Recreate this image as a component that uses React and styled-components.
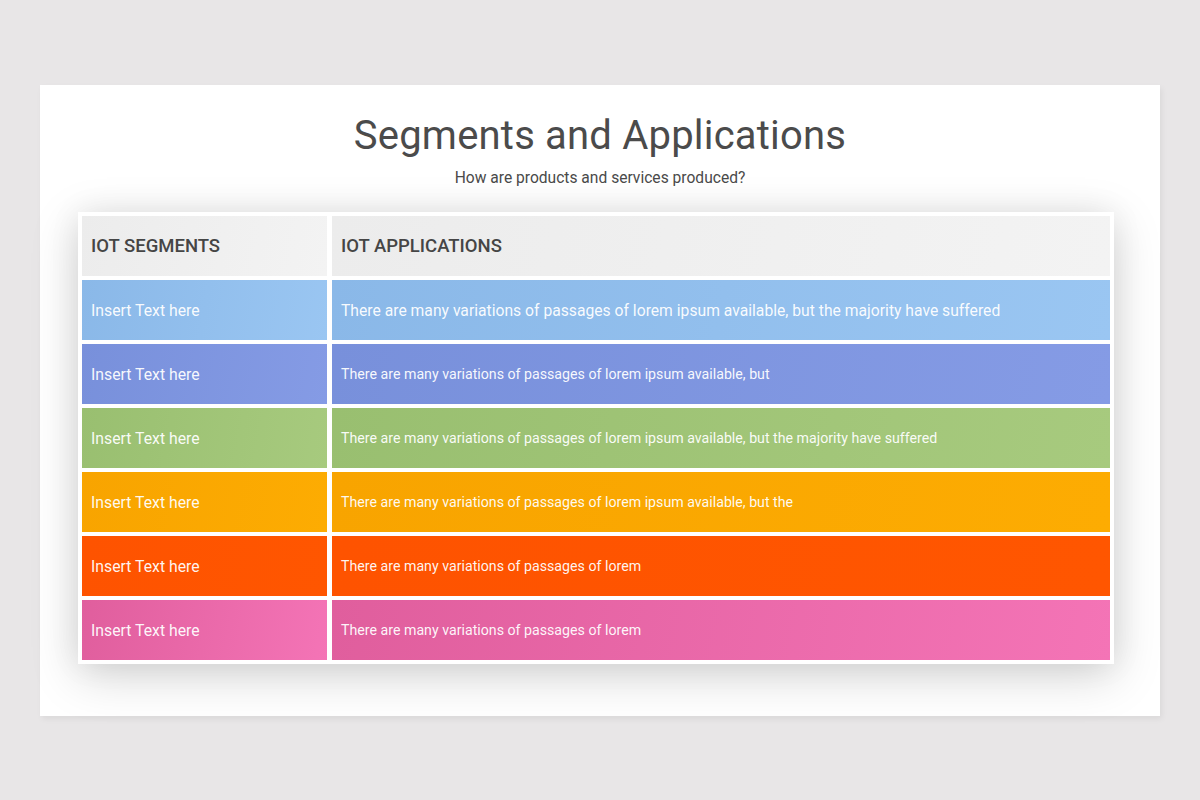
import React from "react";
import styled, { createGlobalStyle } from "styled-components";

const Global = createGlobalStyle`
  html, body { margin: 0; padding: 0; background: #e8e6e7; }
  body { font-family: Roboto, "Noto Sans", "Liberation Sans", sans-serif; }
`;

const Page = styled.div`
  width: 1200px;
  height: 800px;
  padding: 85px 40px 0;
  box-sizing: border-box;
`;

const Slide = styled.section`
  height: 631px;
  background: #ffffff;
  box-shadow: 2px 3px 6px rgba(0, 0, 0, 0.06);
  display: flex;
  flex-direction: column;
  align-items: center;
  padding-top: 27px;
  box-sizing: border-box;
`;

const Title = styled.h1`
  margin: 0;
  font-weight: 400;
  font-size: 40px;
  line-height: 48px;
  color: #4b4b4b;
  letter-spacing: 0.2px;
`;

const Subtitle = styled.p`
  margin: 8px 0 0;
  font-size: 15.6px;
  line-height: 20px;
  color: #4a4a4a;
`;

const Table = styled.div`
  margin: 24px 8px 0 0;
  width: 1036px;
  box-sizing: border-box;
  padding: 4px;
  background: #ffffff;
  display: grid;
  grid-template-columns: 245px 1fr;
  grid-auto-rows: 60px;
  column-gap: 5px;
  row-gap: 4px;
  box-shadow: 0 12px 45px rgba(0, 0, 0, 0.17), 0 0 30px rgba(0, 0, 0, 0.07);
`;

const HeadCell = styled.div`
  background: linear-gradient(100deg, #ececec, #f3f3f3);
  display: flex;
  align-items: center;
  padding-left: 9px;
  font-size: 18.5px;
  font-weight: 500;
  color: #454545;
`;

const Cell = styled.div`
  background: linear-gradient(100deg, ${(p) => p.$from}, ${(p) => p.$to});
  display: flex;
  align-items: center;
  padding-left: 9px;
  font-size: ${(p) => p.$size}px;
  color: rgba(255, 255, 255, 0.94);
  white-space: nowrap;
`;

const rows = [
  { from: "#8ab8e8", to: "#9ac6f2", text: "There are many variations of passages of lorem ipsum available, but the majority have suffered", size: 15.7 },
  { from: "#7890db", to: "#859be5", text: "There are many variations of passages of lorem ipsum available, but", size: 14.2 },
  { from: "#99bf70", to: "#a7ca7e", text: "There are many variations of passages of lorem ipsum available, but the majority have suffered", size: 14.2 },
  { from: "#f8a400", to: "#fdac02", text: "There are many variations of passages of lorem ipsum available, but the", size: 14.2 },
  { from: "#fe5300", to: "#ff5600", text: "There are many variations of passages of lorem", size: 14.2 },
  { from: "#e05e9d", to: "#f474b6", text: "There are many variations of passages of lorem", size: 14.2 },
];

export default function App() {
  return (
    <Page>
      <Global />
      <Slide>
        <Title>Segments and Applications</Title>
        <Subtitle>How are products and services produced?</Subtitle>
        <Table>
          <HeadCell>IOT SEGMENTS</HeadCell>
          <HeadCell>IOT APPLICATIONS</HeadCell>
          {rows.map((r, i) => (
            <React.Fragment key={i}>
              <Cell $from={r.from} $to={r.to} $size={15.8}>Insert Text here</Cell>
              <Cell $from={r.from} $to={r.to} $size={r.size}>{r.text}</Cell>
            </React.Fragment>
          ))}
        </Table>
      </Slide>
    </Page>
  );
}
